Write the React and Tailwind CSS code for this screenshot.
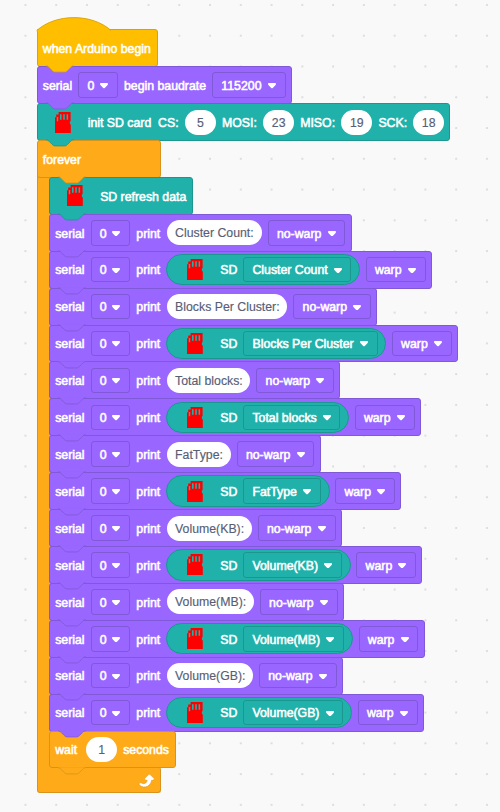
const TONES = {
  purple: { box: 'bg-[#9966ff] border-[#8059d6]', fill: '#9966ff', stroke: '#8059d6' },
  teal: { box: 'bg-[#20b2aa] border-[#1c9790]', fill: '#20b2aa', stroke: '#1c9790' },
  orange: { box: 'bg-[#ffab19] border-[#d9931d]', fill: '#ffab19', stroke: '#d9931d' },
  yellow: { box: 'bg-[#ffbf00] border-[#d9a305]', fill: '#ffbf00', stroke: '#d9a305' },
};

function Tab({ tone, className = 'left-[9.2px]' }) {
  const t = TONES[tone];
  const d = 'M0,0 c2,0 3,1 4,2 l4,4 c1,1 2,2 4,2 h12 c2,0 3,-1 4,-2 l4,-4 c1,-1 2,-2 4,-2';
  return (
    <svg viewBox="0 -1 36 10" className={`absolute top-[36px] z-10 h-[7.7px] w-[27.7px] overflow-visible ${className}`}>
      <path d={`${d} v-0.8 h-36 z`} fill={t.fill} />
      <path d={d} fill="none" stroke={t.stroke} strokeWidth="1.1" />
    </svg>
  );
}

function Block({ tone, width, children, tabClass, round = 'rounded-[3px]' }) {
  return (
    <div className={`relative h-[36.92px] shrink-0 ${width}`}>
      <div className={`flex h-[37.9px] w-full items-center gap-[6.15px] border px-[5.2px] ${round} ${TONES[tone].box}`}>
        {children}
      </div>
      <Tab tone={tone} className={tabClass} />
    </div>
  );
}

function Label({ children, className = '' }) {
  return (
    <span className={`pt-[1.6px] text-[12.3px] leading-[16px] whitespace-pre text-white [-webkit-text-stroke:0.55px_white] ${className}`}>
      {children}
    </span>
  );
}

function Pill({ children, className = 'ml-[0.3px] w-[30.8px] justify-center' }) {
  return (
    <span className={`flex h-[25px] shrink-0 items-center rounded-full bg-white pt-px text-[12.3px] leading-[16px] whitespace-nowrap text-[#575e75] [-webkit-text-stroke:0.15px_#575e75] ${className}`}>
      {children}
    </span>
  );
}

function Dropdown({ children, tone = 'purple', className = '' }) {
  const edge = tone === 'teal' ? 'border-[#1c9790]' : 'border-[#8059d6]';
  return (
    <span className={`flex h-[25.6px] shrink-0 items-center justify-between rounded-[3px] border pr-[8.8px] pl-[8.2px] ${edge} ${className}`}>
      <Label>{children}</Label>
      <svg viewBox="0 0 16 11" className="mt-[1.5px] h-[5.5px] w-[8px]">
        <path fill="#fff" d="M2 0.2H14C16 0.2 16.4 2.6 15.2 3.9L9.6 9.9C8.7 10.9 7.3 10.9 6.4 9.9L0.8 3.9C-0.4 2.6 0 0.2 2 0.2z" />
      </svg>
    </span>
  );
}

function CardIcon({ className = '' }) {
  return (
    <svg viewBox="0 0 16 21" className={`h-[21px] w-[16px] shrink-0 ${className}`}>
      <path
        fill="#ff0000"
        fillRule="evenodd"
        d="M3.6 0H15.6V9.2H14.9V12.2H15.8V21H0V5.2H1.2V2.6H3.6Z M1.8 5H3.2V9.2H1.8Z M5 2.2H6.6V7.8H5Z M8.3 2.2H9.8V7.8H8.3Z M11.6 2.2H13.1V7.8H11.6Z"
      />
    </svg>
  );
}

const ROWS = [
  { text: 'Cluster Count:', w: 'w-[302.6px]' },
  { sd: 'Cluster Count', w: 'w-[382.7px]' },
  { text: 'Blocks Per Cluster:', w: 'w-[328.3px]' },
  { sd: 'Blocks Per Cluster', w: 'w-[408.9px]' },
  { text: 'Total blocks:', w: 'w-[291.3px]' },
  { sd: 'Total blocks', w: 'w-[371.7px]' },
  { text: 'FatType:', w: 'w-[271.6px]' },
  { sd: 'FatType', w: 'w-[352.2px]' },
  { text: 'Volume(KB):', w: 'w-[292.7px]' },
  { sd: 'Volume(KB)', w: 'w-[373.4px]' },
  { text: 'Volume(MB):', w: 'w-[294.8px]' },
  { sd: 'Volume(MB)', w: 'w-[375.6px]' },
  { text: 'Volume(GB):', w: 'w-[293.9px]' },
  { sd: 'Volume(GB)', w: 'w-[374.7px]' },
];

function PrintRow({ row }) {
  return (
    <Block tone="purple" width={row.w}>
      <Label className="w-[29.3px]">serial</Label>
      <Dropdown className="w-[39.6px]">0</Dropdown>
      <Label className="w-[24.2px]">print</Label>
      {row.text ? (
        <>
          <Pill className="min-w-0 flex-1 pl-[8.4px]">{row.text}</Pill>
          <Dropdown className="w-[77.7px]">no-warp</Dropdown>
        </>
      ) : (
        <>
          <span className="-mr-[0.6px] -ml-[0.5px] flex h-[31.5px] min-w-0 flex-1 items-center rounded-full border border-[#1c9790] bg-[#20b2aa] pr-[7.8px] pl-[20px]">
            <CardIcon />
            <Label className="ml-[17px] w-[23.1px]">SD</Label>
            <Dropdown tone="teal" className="min-w-0 flex-1">{row.sd}</Dropdown>
          </span>
          <Dropdown className="w-[59.8px]">warp</Dropdown>
        </>
      )}
    </Block>
  );
}

export default function App() {
  return (
    <div className="h-[812px] w-[500px] overflow-hidden bg-[#f9f9f9] bg-[radial-gradient(circle_at_10px_10px,#dcdcdc_0.7px,transparent_1.3px)] bg-[length:30.77px_30.77px] bg-[position:15.5px_-5px] pt-[29.3px] pl-[36.6px] font-['Liberation_Sans',Arial,sans-serif]">
      <div className="flex flex-col items-start">
        <div className="relative">
          <Block tone="yellow" width="w-[121.4px]" round="rounded-[3px] rounded-tl-none">
            <Label>when Arduino begin</Label>
          </Block>
          <svg viewBox="0 -18 98 20" className="absolute -top-[13.8px] left-[0.4px] h-[15.4px] w-[75.4px] overflow-visible">
            <path d="M0,2 V0.6 c25,-22 71,-22 96,0 L97,2 z" fill="#ffbf00" />
            <path d="M0,2 V0.6 c25,-22 71,-22 96,0" fill="none" stroke="#d9a305" strokeWidth="1.2" />
          </svg>
        </div>

        <Block tone="purple" width="w-[255px]">
          <Label className="w-[29.3px]">serial</Label>
          <Dropdown className="w-[39.6px]">0</Dropdown>
          <Label>begin baudrate</Label>
          <Dropdown className="ml-auto w-[73.8px]">115200</Dropdown>
        </Block>

        <Block tone="teal" width="w-[413.4px]">
          <CardIcon className="ml-[12px]" />
          <Label className="ml-[10.8px]">{'init SD card  CS:'}</Label>
          <Pill>5</Pill>
          <Label>MOSI:</Label>
          <Pill>23</Pill>
          <Label>MISO:</Label>
          <Pill>19</Pill>
          <Label>SCK:</Label>
          <Pill className="ml-auto w-[30.8px] justify-center">18</Pill>
        </Block>

        <Block tone="orange" width="w-[124px]" tabClass="left-[21.5px]">
          <Label>forever</Label>
        </Block>

        <div className="flex">
          <div className="-mt-[3px] -mb-[3px] w-[14px] shrink-0 border-l border-[#d9931d] bg-[#ffab19]" />
          <div className="-ml-[1.6px] flex flex-col items-start">
            <Block tone="teal" width="w-[144px]">
              <CardIcon className="ml-[12px]" />
              <Label className="ml-[10.8px]">SD refresh data</Label>
            </Block>
            {ROWS.map((row, i) => (
              <PrintRow key={i} row={row} />
            ))}
            <Block tone="orange" width="w-[126.7px]">
              <Label>wait</Label>
              <Pill className="ml-[3px] w-[30.8px] justify-center">1</Pill>
              <Label>seconds</Label>
            </Block>
          </div>
        </div>

        <div className="flex h-[25.4px] w-[124px] items-center justify-end rounded-[3px] rounded-tl-none border border-t-0 border-[#d9931d] bg-[#ffab19] pt-[2px] pr-[5.6px]">
          <svg viewBox="0 0 24 24" className="h-[18.5px] w-[18.5px]">
            <path
              d="M23.3 11c-.3.6-.9 1-1.5 1h-1.6c-.1 1.3-.5 2.5-1.1 3.6-.9 1.7-2.3 3.2-4.1 4.1-1.7.9-3.6 1.2-5.5.9-1.8-.3-3.5-1.1-4.9-2.3-.7-.7-.7-1.9 0-2.6.6-.6 1.6-.7 2.3-.2H7c.9.6 1.9.9 2.9.9s1.9-.3 2.7-.9c.7-.6 1.3-1.4 1.6-2.2.2-.4.3-.8.3-1.3H13c-.9 0-1.7-.7-1.7-1.6 0-.4.2-.8.5-1.2l4.4-4.4c.7-.6 1.7-.6 2.4 0L23 9.2c.5.5.6 1.2.3 1.8z"
              fill="#fff"
              stroke="#cf8b17"
              strokeWidth="0.6"
            />
          </svg>
        </div>
      </div>
    </div>
  );
}
